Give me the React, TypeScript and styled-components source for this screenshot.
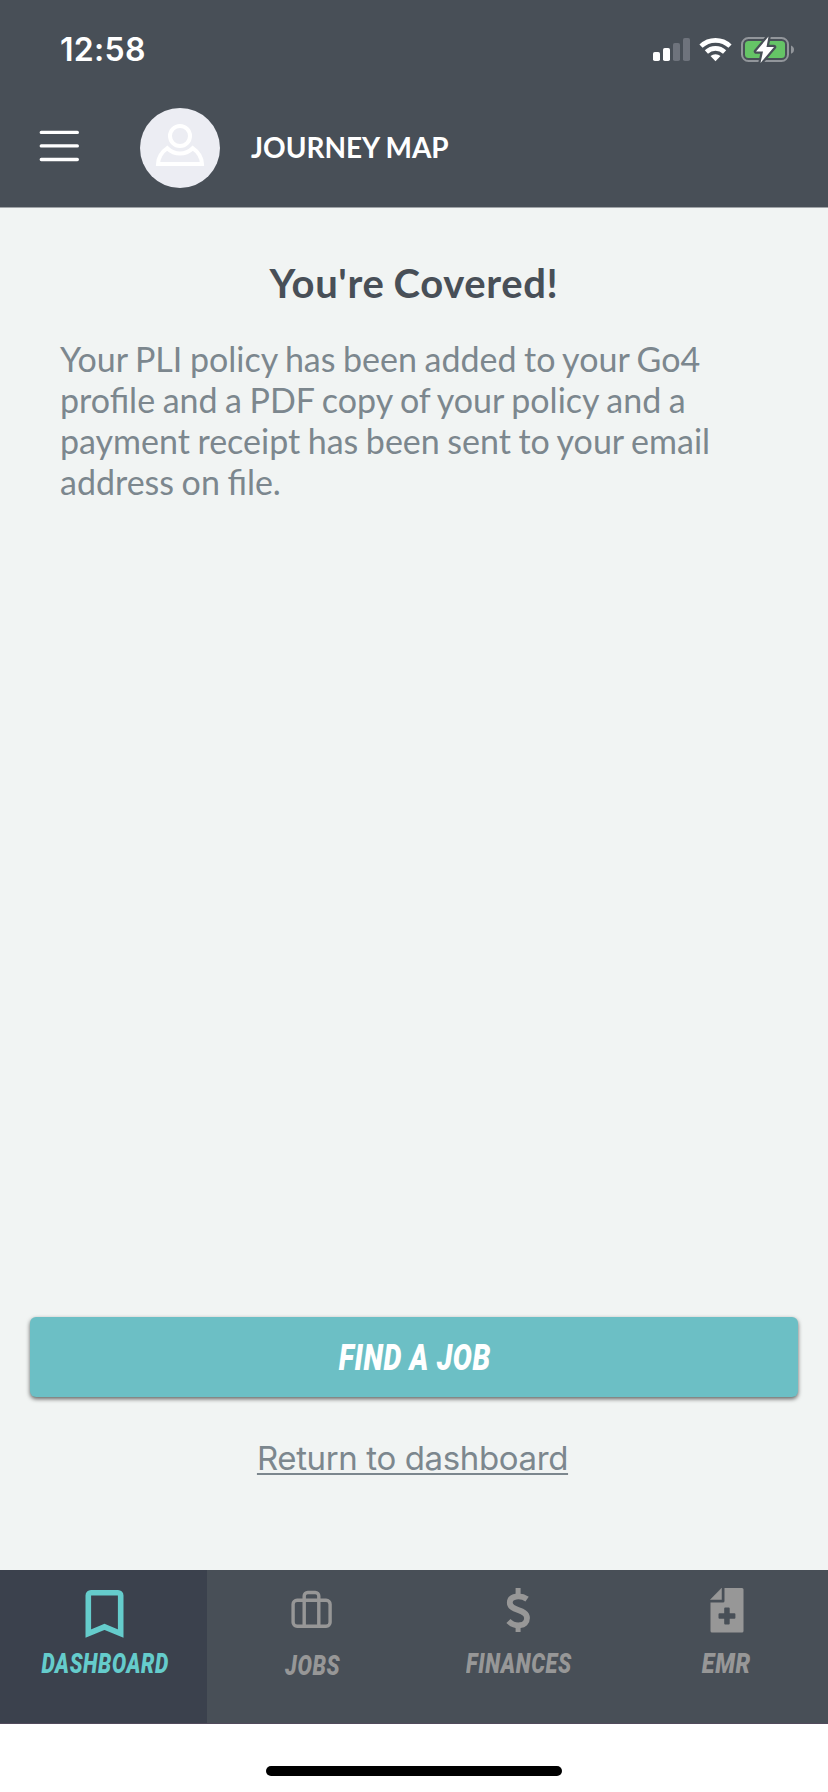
import React from "react";
import styled, { createGlobalStyle } from "styled-components";

const GlobalStyle = createGlobalStyle`
  * { box-sizing: border-box; }
  body { margin: 0; background: #fff; }
  button { font: inherit; border: 0; margin: 0; padding: 0; background: none; color: inherit; }
  svg { display: block; flex: none; }
`;

const Screen = styled.div`
  width: 828px;
  height: 1792px;
  display: flex;
  flex-direction: column;
  background: #f1f4f3;
  font-family: Lato, "Open Sans", sans-serif;
  overflow: hidden;
`;

const Header = styled.header`
  height: 208px;
  background: #484f57;
  border-bottom: 1px solid #a0a4a8;
  color: #fff;
`;

const StatusBar = styled.div`
  height: 88px;
  display: flex;
  justify-content: space-between;
  align-items: flex-start;
  padding: 30px 32px 0 60px;
`;

const Time = styled.div`
  font: 600 32px/40px Inter, sans-serif;
  letter-spacing: 0.3px;
`;

const Toolbar = styled.div`
  height: 120px;
  display: flex;
  align-items: center;
  padding-left: 39px;
`;

const MenuButton = styled.button`
  width: 101px;
  display: flex;
  margin-bottom: 5px;
`;

const Avatar = styled.div`
  width: 80px;
  height: 80px;
  border-radius: 50%;
  background: #ecedf3;
`;

const Title = styled.div`
  margin: 0 0 2px 31px;
  font-size: 28px;
  line-height: 34px;
  font-weight: 700;
  word-spacing: -0.5px;
`;

const Content = styled.main`
  flex: 1;
  display: flex;
  flex-direction: column;
  align-items: center;
  padding: 51px 30px 0;
`;

const Heading = styled.h1`
  margin: 0;
  font-size: 40px;
  line-height: 48px;
  font-weight: 700;
  letter-spacing: 0.65px;
  word-spacing: -1.4px;
  color: #484f57;
`;

const Message = styled.p`
  width: 708px;
  margin: 32.4px 0 auto;
  font-size: 34px;
  line-height: 40.8px;
  word-spacing: -1.15px;
  color: #7c878e;
`;

const PrimaryButton = styled.button`
  width: 768px;
  height: 80px;
  border-radius: 6px;
  background: #6cbfc5;
  color: #fff;
  box-shadow: 0 2px 4px rgba(0, 0, 0, 0.6);
`;

const Condensed = styled.span<{ $size: number; $scale: number }>`
  display: inline-block;
  padding-left: 2px;
  font: italic 900 ${(p) => p.$size}px/1.2 Roboto, sans-serif;
  letter-spacing: 0.8px;
  white-space: nowrap;
  transform: scaleX(${(p) => p.$scale});
`;

const ReturnLink = styled.a`
  margin: 39px 3px 90px 0;
  height: 44px;
  font: 400 33px/44px Inter, sans-serif;
  letter-spacing: -0.37px;
  color: #7c878e;
  text-decoration: underline;
  text-decoration-thickness: 2px;
  text-underline-offset: 3px;
  text-decoration-skip-ink: none;
`;

const TabBar = styled.nav`
  height: 154px;
  display: grid;
  grid-template-columns: repeat(4, 1fr);
  background: #484f57;
  border-bottom: 1px solid #514a5c;
`;

const Tab = styled.div<{ $active?: boolean }>`
  display: flex;
  flex-direction: column;
  align-items: center;
  padding-top: 16px;
  background: ${(p) => (p.$active ? "#3b414d" : "transparent")};
  color: ${(p) => (p.$active ? "#65cccc" : "#979797")};
`;

const TabLabel = styled.div<{ $drop?: number }>`
  height: 34px;
  margin-top: ${(p) => 7 + (p.$drop ?? 0)}px;
  padding-left: 2px;
  display: flex;
  align-items: center;
`;

const HomeArea = styled.footer`
  height: 68px;
  padding-top: 42px;
  background: #fff;
`;

const HomeIndicator = styled.div`
  width: 296px;
  height: 10px;
  margin: 0 auto;
  border-radius: 5px;
  background: #000;
`;

const StatusIcons = () => (
  <svg width="146" height="34" viewBox="650 30 146 34" fill="#fff">
    <rect x="653" y="52" width="7" height="9" rx="1.8" />
    <rect x="663" y="48" width="7" height="13" rx="1.8" />
    <rect x="673" y="43" width="7" height="18" rx="1.8" fill="#6e737c" />
    <rect x="683" y="38" width="7" height="23" rx="1.8" fill="#6e737c" />
    <g fill="none" stroke="#fff" strokeWidth="4.6">
      <path d="M701 46.2a21 21 0 0 1 29 0" />
      <path d="M706.4 52a13.2 13.2 0 0 1 18.2 0" />
    </g>
    <path d="M715.5 61.2l-5-5.1a7.4 7.4 0 0 1 10 0z" />
    <rect x="742" y="38" width="46" height="23" rx="6.5" fill="none" stroke="#92969b" strokeWidth="2" />
    <path d="M791 45.5c4 1.3 4 7 0 8.3z" fill="#92969b" />
    <rect x="745" y="41" width="40" height="17" rx="3.5" fill="#65c466" />
    <path d="M768.5 36.5L756 51.5h7l-2.5 11.5L774 47h-7.5z" stroke="#484f57" strokeWidth="4.5" strokeLinejoin="round" />
    <path d="M768.5 36.5L756 51.5h7l-2.5 11.5L774 47h-7.5z" />
  </svg>
);

const MenuIcon = () => (
  <svg width="41" height="34" viewBox="39 129 41 34" stroke="#fff" strokeWidth="3.4" strokeLinecap="round">
    <path d="M41.3 132.4H77.3M41.3 145.9H77.3M41.3 159.5H77.3" />
  </svg>
);

const PersonIcon = () => (
  <svg width="80" height="80" viewBox="0 0 80 80" fill="none" stroke="#fff" strokeWidth="4">
    <circle cx="40" cy="28" r="10" />
    <path d="M27.3 40.2C21.5 44.2 18.3 49.5 18 56H62C61.7 49.5 58.5 44.2 52.7 40.2C45.3 47.4 34.7 47.4 27.3 40.2z" />
  </svg>
);

const BookmarkIcon = () => (
  <svg width="48" height="54" viewBox="79.5 1586 48 54" fill="none" stroke="currentColor" strokeWidth="5.6">
    <path d="M87.8 1633.6V1595.5a2.7 2.7 0 0 1 2.7-2.7H117.5a2.7 2.7 0 0 1 2.7 2.7V1633.6L104 1626.9z" />
  </svg>
);

const SuitcaseIcon = () => (
  <svg width="48" height="54" viewBox="286.5 1586 48 54" fill="none" stroke="currentColor" strokeWidth="3.4">
    <rect x="292.6" y="1600.3" width="37" height="26" rx="4" />
    <path d="M303.7 1626V1596a3.5 3.5 0 0 1 3.5-3.5h7.6a3.5 3.5 0 0 1 3.5 3.5v30" />
  </svg>
);

const DollarIcon = () => (
  <svg width="48" height="54" viewBox="493.5 1586 48 54" fill="none" stroke="currentColor">
    <path d="M517.6 1588v8M517.6 1625v7" strokeWidth="5" />
    <path d="M526.6 1599.2c-6.2-4.3-17.3-3.8-17.3 3.6 0 8.8 17.2 5.6 17.2 15.2 0 8.8-12 9.5-18.6 3" strokeWidth="5.8" />
  </svg>
);

const RecordIcon = () => (
  <svg width="48" height="54" viewBox="700.5 1586 48 54" fill="currentColor">
    <path d="M721 1588.2v11.3h-11z" stroke="currentColor" strokeWidth=".5" />
    <path fillRule="evenodd" d="M724 1588h17.5a1.5 1.5 0 0 1 1.5 1.5v41.5a1.5 1.5 0 0 1-1.5 1.5h-30a1.5 1.5 0 0 1-1.5-1.5v-28.5h12.5a1.5 1.5 0 0 0 1.5-1.5zM724.7 1607.5a1 1 0 0 0-1 1v4.7h-4.7a1 1 0 0 0-1 1v3.5a1 1 0 0 0 1 1h4.7v4.7a1 1 0 0 0 1 1h3.5a1 1 0 0 0 1-1v-4.7h4.7a1 1 0 0 0 1-1v-3.5a1 1 0 0 0-1-1h-4.7v-4.7a1 1 0 0 0-1-1z" />
  </svg>
);

const tabs = [
  { label: "DASHBOARD", icon: <BookmarkIcon />, active: true, scale: 0.755 },
  { label: "JOBS", icon: <SuitcaseIcon />, drop: 2, scale: 0.77 },
  { label: "FINANCES", icon: <DollarIcon />, scale: 0.775 },
  { label: "EMR", icon: <RecordIcon />, scale: 0.83 },
];

export default function App() {
  return (
    <Screen>
      <GlobalStyle />
      <Header>
        <StatusBar>
          <Time>12:58</Time>
          <StatusIcons />
        </StatusBar>
        <Toolbar>
          <MenuButton aria-label="Menu"><MenuIcon /></MenuButton>
          <Avatar><PersonIcon /></Avatar>
          <Title>JOURNEY MAP</Title>
        </Toolbar>
      </Header>
      <Content>
        <Heading>You're Covered!</Heading>
        <Message>
          Your PLI policy has been added to your Go4 profile and a PDF copy of your policy and a payment receipt has been sent to your email address on file.
        </Message>
        <PrimaryButton><Condensed $size={37.5} $scale={0.76}>FIND A JOB</Condensed></PrimaryButton>
        <ReturnLink>Return to dashboard</ReturnLink>
      </Content>
      <TabBar>
        {tabs.map((t) => (
          <Tab key={t.label} $active={t.active}>
            {t.icon}
            <TabLabel $drop={t.drop}><Condensed $size={28} $scale={t.scale}>{t.label}</Condensed></TabLabel>
          </Tab>
        ))}
      </TabBar>
      <HomeArea><HomeIndicator /></HomeArea>
    </Screen>
  );
}
